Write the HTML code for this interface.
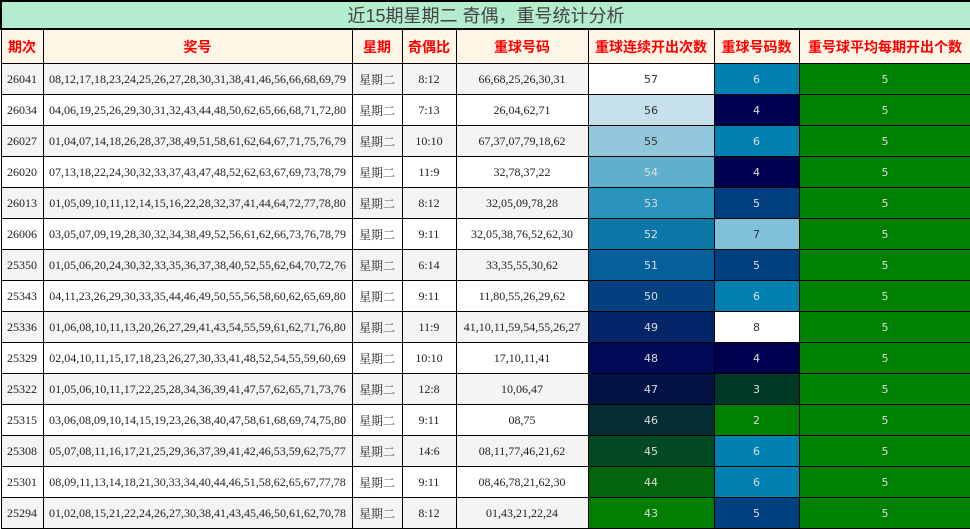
<!DOCTYPE html>
<html><head><meta charset="utf-8"><style>
body{margin:0;background:#fff;width:970px;height:529px;overflow:hidden}
table{border-collapse:collapse;table-layout:fixed;width:970px;position:absolute;left:0;top:0}
td{border:1px solid #000;padding:0;text-align:center;font-family:"Liberation Serif","Noto Serif CJK SC",serif;font-size:12px;color:#222;height:30px;overflow:hidden;white-space:nowrap}
.t td{height:26px;background:#b4ecce;font-family:"Liberation Sans","Noto Sans CJK SC",sans-serif;font-size:18px;color:#444;border:2px solid #000}
.h td{height:33px;background:#fdf5e6;color:#f00;font-weight:bold;font-family:"Liberation Sans","Noto Sans CJK SC",sans-serif;font-size:14px}
tr.g td{background:#f4f4f4}
td.c{font-family:"DejaVu Sans","Liberation Sans",sans-serif;font-size:11px;color:#ddd}
td.d{color:#333}
td.gr{background:#008000!important;font-family:"DejaVu Sans",sans-serif;font-size:11px;color:#ddd}
</style></head><body>
<table>
<colgroup><col style="width:42px"><col style="width:309px"><col style="width:50px"><col style="width:54px"><col style="width:132px"><col style="width:126px"><col style="width:85px"><col style="width:172px"></colgroup>
<tr class="t"><td colspan="8">近15期星期二 奇偶，重号统计分析</td></tr>
<tr class="h"><td>期次</td><td>奖号</td><td>星期</td><td>奇偶比</td><td>重球号码</td><td>重球连续开出次数</td><td>重球号码数</td><td>重号球平均每期开出个数</td></tr>
<tr class="g"><td>26041</td><td>08,12,17,18,23,24,25,26,27,28,30,31,38,41,46,56,66,68,69,79</td><td>星期二</td><td>8:12</td><td>66,68,25,26,30,31</td><td class="c d" style="background:#fff!important">57</td><td class="c" style="background:#0080b0!important">6</td><td class="gr">5</td></tr>
<tr><td>26034</td><td>04,06,19,25,26,29,30,31,32,43,44,48,50,62,65,66,68,71,72,80</td><td>星期二</td><td>7:13</td><td>26,04,62,71</td><td class="c d" style="background:#c7e1ec">56</td><td class="c" style="background:#000050">4</td><td class="gr">5</td></tr>
<tr class="g"><td>26027</td><td>01,04,07,14,18,26,28,37,38,49,51,58,61,62,64,67,71,75,76,79</td><td>星期二</td><td>10:10</td><td>67,37,07,79,18,62</td><td class="c d" style="background:#93c8dc!important">55</td><td class="c" style="background:#0080b0!important">6</td><td class="gr">5</td></tr>
<tr><td>26020</td><td>07,13,18,22,24,30,32,33,37,43,47,48,52,62,63,67,69,73,78,79</td><td>星期二</td><td>11:9</td><td>32,78,37,22</td><td class="c" style="background:#5fb0cc">54</td><td class="c" style="background:#000050">4</td><td class="gr">5</td></tr>
<tr class="g"><td>26013</td><td>01,05,09,10,11,12,14,15,16,22,28,32,37,41,44,64,72,77,78,80</td><td>星期二</td><td>8:12</td><td>32,05,09,78,28</td><td class="c" style="background:#2b94bc!important">53</td><td class="c" style="background:#004080!important">5</td><td class="gr">5</td></tr>
<tr><td>26006</td><td>03,05,07,09,19,28,30,32,34,38,49,52,56,61,62,66,73,76,78,79</td><td>星期二</td><td>9:11</td><td>32,05,38,76,52,62,30</td><td class="c" style="background:#0c78a8">52</td><td class="c d" style="background:#80c0d8">7</td><td class="gr">5</td></tr>
<tr class="g"><td>25350</td><td>01,05,06,20,24,30,32,33,35,36,37,38,40,52,55,62,64,70,72,76</td><td>星期二</td><td>6:14</td><td>33,35,55,30,62</td><td class="c" style="background:#04609c!important">51</td><td class="c" style="background:#004080!important">5</td><td class="gr">5</td></tr>
<tr><td>25343</td><td>04,11,23,26,29,30,33,35,44,46,49,50,55,56,58,60,62,65,69,80</td><td>星期二</td><td>9:11</td><td>11,80,55,26,29,62</td><td class="c" style="background:#044080">50</td><td class="c" style="background:#0080b0">6</td><td class="gr">5</td></tr>
<tr class="g"><td>25336</td><td>01,06,08,10,11,13,20,26,27,29,41,43,54,55,59,61,62,71,76,80</td><td>星期二</td><td>11:9</td><td>41,10,11,59,54,55,26,27</td><td class="c" style="background:#032466!important">49</td><td class="c d" style="background:#fff!important">8</td><td class="gr">5</td></tr>
<tr><td>25329</td><td>02,04,10,11,15,17,18,23,26,27,30,33,41,48,52,54,55,59,60,69</td><td>星期二</td><td>10:10</td><td>17,10,11,41</td><td class="c" style="background:#020a56">48</td><td class="c" style="background:#000050">4</td><td class="gr">5</td></tr>
<tr class="g"><td>25322</td><td>01,05,06,10,11,17,22,25,28,34,36,39,41,47,57,62,65,71,73,76</td><td>星期二</td><td>12:8</td><td>10,06,47</td><td class="c" style="background:#031244!important">47</td><td class="c" style="background:#003a26!important">3</td><td class="gr">5</td></tr>
<tr><td>25315</td><td>03,06,08,09,10,14,15,19,23,26,38,40,47,58,61,68,69,74,75,80</td><td>星期二</td><td>9:11</td><td>08,75</td><td class="c" style="background:#032c34">46</td><td class="c" style="background:#008000">2</td><td class="gr">5</td></tr>
<tr class="g"><td>25308</td><td>05,07,08,11,16,17,21,25,29,36,37,39,41,42,46,53,59,62,75,77</td><td>星期二</td><td>14:6</td><td>08,11,77,46,21,62</td><td class="c" style="background:#034a22!important">45</td><td class="c" style="background:#0080b0!important">6</td><td class="gr">5</td></tr>
<tr><td>25301</td><td>08,09,11,13,14,18,21,30,33,34,40,44,46,51,58,62,65,67,77,78</td><td>星期二</td><td>9:11</td><td>08,46,78,21,62,30</td><td class="c" style="background:#03640e">44</td><td class="c" style="background:#0080b0">6</td><td class="gr">5</td></tr>
<tr class="g"><td>25294</td><td>01,02,08,15,21,22,24,26,27,30,38,41,43,45,46,50,61,62,70,78</td><td>星期二</td><td>8:12</td><td>01,43,21,22,24</td><td class="c" style="background:#027e00!important">43</td><td class="c" style="background:#004080!important">5</td><td class="gr">5</td></tr>
</table>
</body></html>
